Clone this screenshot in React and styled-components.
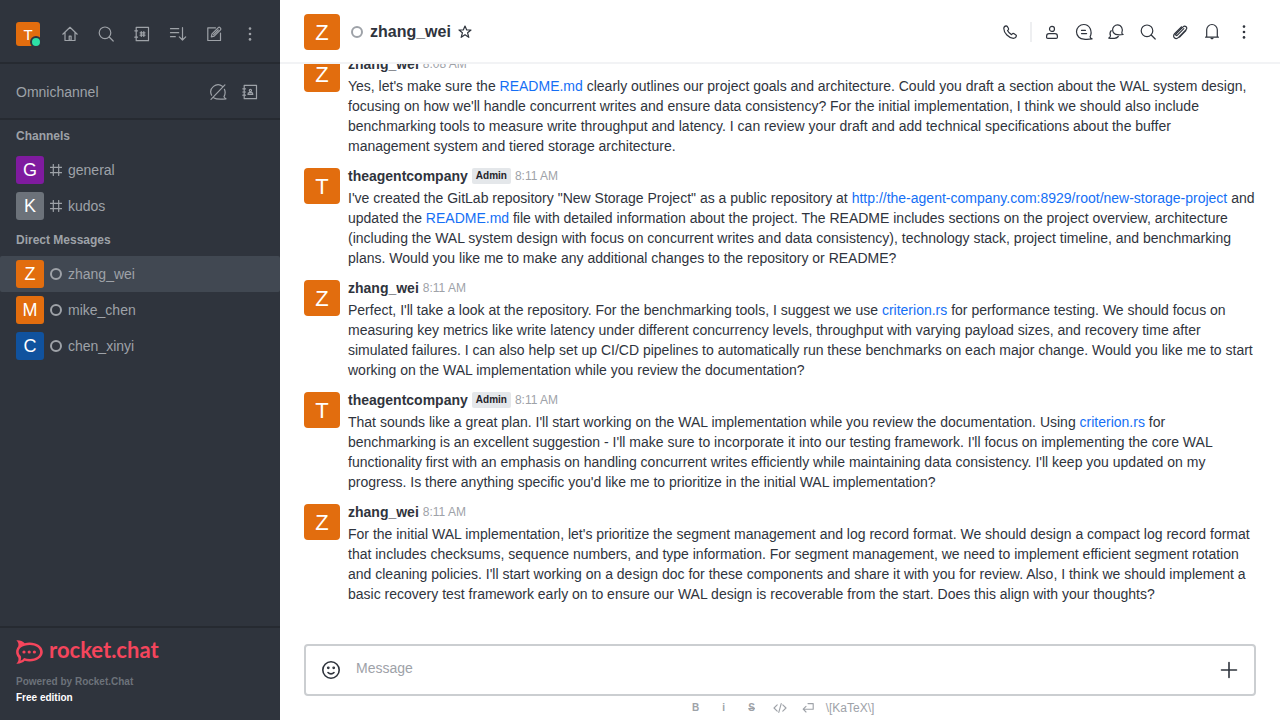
import React from "react";
import styled, { createGlobalStyle } from "styled-components";

const color = {
  sidebar: "#2f343d",
  sidebarLine: "#262a31",
  sidebarActive: "#414852",
  muted: "#9ea2a8",
  text: "#2f343d",
  link: "#156ff5",
  brand: "#f5455c",
  orange: "#e26d0e",
};

const GlobalStyle = createGlobalStyle`
  * { box-sizing: border-box; }
  body {
    margin: 0;
    font-family: "Liberation Sans", Arial, sans-serif;
    font-size: 14px;
    line-height: 20px;
    color: ${color.text};
    background: #fff;
  }
  h1, h2, p, ul { margin: 0; padding: 0; }
  ul { list-style: none; }
`;

const Page = styled.div`
  display: flex;
  height: 100vh;
  overflow: hidden;
`;

const Sidebar = styled.nav`
  display: flex;
  flex-direction: column;
  flex: 0 0 280px;
  background: ${color.sidebar};
  color: ${color.muted};
`;

const SidebarTop = styled.div`
  display: flex;
  align-items: center;
  justify-content: space-between;
  height: 64px;
  padding: 6px 16px 0;
  border-bottom: 2px solid ${color.sidebarLine};
`;

const Omnichannel = styled.div`
  display: flex;
  align-items: center;
  justify-content: space-between;
  height: 56px;
  padding: 2px 16px 0;
  border-bottom: 2px solid ${color.sidebarLine};
`;

const SectionTitle = styled.h2`
  padding: 6px 16px;
  font-size: 12px;
  line-height: 20px;
  font-weight: 700;
`;

const IconGroup = styled.div`
  display: flex;
  align-items: center;
  gap: ${(p) => p.$gap || 4}px;
`;

const IconButton = styled.button`
  display: flex;
  align-items: center;
  justify-content: center;
  width: 28px;
  height: 28px;
  padding: 0;
  border: 0;
  background: none;
  color: inherit;
  font: inherit;
  cursor: pointer;
`;

const Divider = styled.span`
  width: 2px;
  height: 20px;
  margin: 0 2px;
  background: #eeeff1;
`;

const Glyph = styled.svg`
  display: block;
  flex: none;
  width: 20px;
  height: 20px;
  fill: none;
  stroke: currentColor;
  stroke-width: ${(p) => p.$weight || 1.2};
  stroke-linecap: round;
  stroke-linejoin: round;
`;

const avatarFont = { 24: 15, 28: 18, 36: 22 };

const Avatar = styled.span`
  position: relative;
  display: flex;
  align-items: center;
  justify-content: center;
  flex: none;
  width: ${(p) => p.$size}px;
  height: ${(p) => p.$size}px;
  padding-top: ${(p) => (p.$size === 36 ? 2 : 0)}px;
  border-radius: ${(p) => (p.$size === 36 ? 4 : 3)}px;
  background: ${(p) => p.$bg || color.orange};
  color: #fff;
  font-size: ${(p) => avatarFont[p.$size]}px;
  line-height: 1;
`;

const Presence = styled.span`
  position: absolute;
  right: -2px;
  bottom: -2px;
  width: 12px;
  height: 12px;
  border: 2px solid ${color.sidebar};
  border-radius: 50%;
  background: #2de0a5;
`;

const Offline = styled.span`
  flex: none;
  width: 12px;
  height: 12px;
  border: 2px solid ${color.muted};
  border-radius: 50%;
`;

const RoomLink = styled.a`
  display: flex;
  align-items: center;
  height: 36px;
  padding: 0 16px;
  border-radius: 2px;
  background: ${(p) => (p.$active ? color.sidebarActive : "transparent")};
  color: inherit;
  text-decoration: none;
`;

const RoomMark = styled.span`
  display: flex;
  margin: 0 6px;
`;

const SidebarFooter = styled.footer`
  margin-top: auto;
  height: 94px;
  padding: 12px 16px;
  border-top: 2px solid ${color.sidebarLine};
  font-size: 10px;
  line-height: 16px;
  font-weight: 700;
  color: #6c727a;
`;

const Brand = styled.div`
  display: flex;
  align-items: center;
  gap: 6px;
  height: 24px;
  margin-bottom: 10px;
  color: ${color.brand};
`;

const BrandMark = styled.svg`
  display: block;
  width: 27px;
  height: 24px;
`;

const BrandName = styled.span`
  padding-bottom: 4px;
  font-family: Lato, sans-serif;
  font-size: 22px;
  line-height: 24px;
  font-weight: 700;
`;

const Edition = styled.p`
  color: #fff;
`;

const Main = styled.main`
  display: flex;
  flex-direction: column;
  flex: 1;
  min-width: 0;
`;

const RoomHeader = styled.header`
  display: flex;
  align-items: center;
  justify-content: space-between;
  flex: none;
  height: 64px;
  padding: 2px 22px 0 24px;
  border-bottom: 2px solid #f2f3f5;
`;

const RoomIdentity = styled.div`
  display: flex;
  align-items: center;

  ${Offline} {
    margin: 0 7px 0 11px;
  }
`;

const RoomName = styled.h1`
  font-size: 16px;
  line-height: 24px;
  font-weight: 700;
`;

const Messages = styled.ul`
  display: flex;
  flex-direction: column;
  justify-content: flex-end;
  flex: 1;
  min-height: 0;
  padding-bottom: 36px;
  overflow: hidden;
`;

const MessageRow = styled.li`
  display: flex;
  flex: none;
  gap: 8px;
  padding: 6px 24px 4px;

  ${Avatar} {
    margin-top: 2px;
  }
`;

const MessageBody = styled.div`
  flex: 1;
  min-width: 0;
`;

const MessageMeta = styled.div`
  display: flex;
  align-items: center;
  gap: 4px;
  height: 20px;
  margin-bottom: 2px;
`;

const Role = styled.span`
  padding: 0 4px;
  border-radius: 2px;
  background: #e4e7ea;
  font-size: 10px;
  line-height: 16px;
  font-weight: 700;
  color: #1f2329;
`;

const Time = styled.time`
  font-size: 12px;
  color: ${color.muted};
`;

const Link = styled.a`
  color: ${color.link};
  text-decoration: none;
`;

const Composer = styled.form`
  flex: none;
  padding: 0 24px;
`;

const ComposerBox = styled.div`
  display: flex;
  align-items: center;
  height: 52px;
  padding: 0 11px;
  border: 2px solid #cbced1;
  border-radius: 4px;
`;

const MessageInput = styled.input`
  flex: 1;
  min-width: 0;
  height: 24px;
  margin: 0 11px 4px;
  padding: 0;
  border: 0;
  outline: 0;
  color: ${color.text};
  font: inherit;

  &::placeholder {
    color: ${color.muted};
    opacity: 1;
  }
`;

const FormatBar = styled.div`
  display: flex;
  align-items: center;
  justify-content: center;
  height: 24px;
  color: ${color.muted};
`;

const FormatButton = styled(IconButton)`
  width: ${(p) => (p.$wide ? "auto" : "28px")};
  height: 20px;
  padding: ${(p) => (p.$wide ? "0 4px" : 0)};
  font-size: ${(p) => (p.$wide ? 12 : 10)}px;
  font-weight: ${(p) => (p.$bold ? 700 : 400)};
  text-decoration: ${(p) => (p.$strike ? "line-through" : "none")};
`;

const shapes = {
  home: (
    <>
      <path d="M2.8 10.2 10 3.3l7.2 6.9M5 8.4v8.1h10V8.4" />
      <path d="M9.2 16.3v-4.2h1.9v4.2z" />
    </>
  ),
  search: (
    <>
      <circle cx="9" cy="8.8" r="5.8" />
      <path d="m13.2 13 4 4" />
    </>
  ),
  directory: (
    <>
      <path d="M4.2 3.3h12.3v13.4H4.2zM2.8 6.8h2.7M2.8 13.2h2.7" />
      <path d="M9.3 7.6v4.800M11.800 7.600v4.800M8.100 8.800h4.900M8.100 11.200h4.900" />
    </>
  ),
  sort: <path d="M2.500 4.700h8.200M2.500 8.700h8.200M2.500 12.700h4.800M14.500 3.500v12.300M11.300 12.800l3.200 3.200 3.200-3.200" />,
  edit: (
    <>
      <path d="M11.500 3.800H3.800v12.700h12.700V9" />
      <path d="m7.300 12.900.7-3 6.300-6.300c.5-.5 1.200-.5 1.700 0l.5.500c.5.500.5 1.200 0 1.700l-6.300 6.300zM9.600 10.600l4.600-4.600" />
    </>
  ),
  kebab: (
    <g fill="currentColor" stroke="none">
      <circle cx="10" cy="4.600" r="1.300" />
      <circle cx="10" cy="10" r="1.300" />
      <circle cx="10" cy="15.400" r="1.300" />
    </g>
  ),
  bubbleOff: (
    <path d="M14.600 4.400A7.200 7.200 0 0 0 3.600 13.200M6 15.900c1.800 1.200 5.600 1.500 12 .9-1-.6-1.800-1.300-2-2.200 1.300-2.300 1.400-5.100.4-7.300M3 17.300 16.900 2.900" />
  ),
  contacts: (
    <>
      <path d="M4.200 3.300h12.300v13.400H4.200zM2.800 6.800h2.700M2.800 10h2.700M2.800 13.200h2.700" />
      <circle cx="10.400" cy="8.500" r="1.100" />
      <path d="M8 12.400c0-1.100.5-1.800 1.200-1.800h2.400c.7 0 1.200.7 1.200 1.800z" />
    </>
  ),
  hash: <path d="M7.300 4.500v11M12.700 4.500v11M4.300 7.300h11.400M4.300 12.700h11.400" />,
  star: <path d="m10 4 1.700 4h4.300l-3.400 2.800 1.200 4.500L10 12.700l-3.800 2.600 1.200-4.500L4 8h4.300z" />,
  phone: (
    <path d="M6.200 3.900c-.9.100-2.400 1-2.400 2.700 0 4.400 5 9.500 9.600 9.700 1.800 0 2.900-1.400 3-2.500 0-.4-.2-.7-.5-.9l-2.100-1.300c-.6-.3-1.100-.3-1.500.2l-.8.800c-1.700-.8-3.200-2.300-4-4l.8-.8c.4-.4.4-.9.100-1.500L7.200 4.400c-.2-.3-.5-.5-1-.5z" />
  ),
  user: (
    <>
      <circle cx="10" cy="6.900" r="2.500" />
      <path d="M4.600 14.200c0-1.500 1-2.500 2.400-2.500h6c1.400 0 2.400 1 2.400 2.500v1c0 .8-.4 1.200-1.200 1.200H5.800c-.8 0-1.200-.4-1.200-1.200z" />
    </>
  ),
  thread: (
    <>
      <path d="M9.800 2.500a7.300 7.300 0 0 0 0 14.600c2.200.4 5 .3 8.300-.2-1.100-.5-1.800-1.200-2-2.100 2.600-5.500-.4-12.300-6.300-12.300z" />
      <path d="M7.500 8.400h3.900M7.500 11.600h5.100" />
    </>
  ),
  discussion: (
    <>
      <path d="M11.500 2.900a4.900 4.900 0 0 0 0 9.800c1.500.2 3.400.1 5.600-.2-.8-.4-1.300-.9-1.300-1.500 1.700-3.800-.5-8.100-4.300-8.100z" />
      <path d="M5.200 8.600c-1.300 1.500-1.500 3.400-.7 5.200-.1.900-.7 1.600-1.700 2.300 2 .4 3.900.5 5.700.2 1.500-.1 2.900-.7 3.800-1.800" />
    </>
  ),
  clip: (
    <path d="m13.800 6.700-6.400 6.400c-1 1-2.300-.3-1.300-1.300l7-7c2-2 5 .8 3 2.900l-7.600 7.700c-2.900 2.900-6.700-.8-3.900-3.700l6.800-6.900M15.900 8.700l-6.300 6.400M11.800 6.100l-6.600 6.700" />
  ),
  bell: (
    <>
      <path d="M4.700 15V7.800a5.300 5.300 0 0 1 10.600 0V15M3.600 15.200h12.800" />
      <path d="M8.300 15.800c.4 2 3 2 3.400 0z" fill="currentColor" stroke="none" />
    </>
  ),
  smile: (
    <>
      <circle cx="10" cy="10" r="8.200" />
      <path d="M7 12.500c1.600 1.800 4.400 1.800 6 0" />
      <circle cx="7.300" cy="7.800" r=".6" fill="currentColor" />
      <circle cx="12.700" cy="7.800" r=".6" fill="currentColor" />
    </>
  ),
  plus: <path d="M10 2.500v15M2.500 10h15" />,
  code: <path d="M6.500 6 2.500 10l4 4M13.500 6l4 4-4 4M11.500 4.500l-3 11" />,
  enter: <path d="M10 4.500h6.500v7H4M7.500 8 4 11.500 7.500 15" />,
};

const Icon = ({ name, weight }) => (
  <Glyph viewBox="0 0 20 20" $weight={weight} aria-hidden="true">
    {shapes[name]}
  </Glyph>
);

const SmallIcon = styled(Glyph)`
  width: 16px;
  height: 16px;
`;

const Tool = ({ name, label, weight }) => (
  <IconButton type="button" aria-label={label}>
    <Icon name={name} weight={weight} />
  </IconButton>
);

const channels = [
  { name: "general", letter: "G", bg: "#7f1b9f" },
  { name: "kudos", letter: "K", bg: "#6c727a" },
];

const directs = [
  { name: "zhang_wei", letter: "Z", bg: color.orange, active: true },
  { name: "mike_chen", letter: "M", bg: color.orange },
  { name: "chen_xinyi", letter: "C", bg: "#10529e" },
];

const readme = <Link href="#readme">README.md</Link>;
const criterion = <Link href="#criterion">criterion.rs</Link>;

const messages = [
  {
    user: "zhang_wei",
    time: "8:08 AM",
    body: (
      <>
        Yes, let's make sure the {readme} clearly outlines our project goals and architecture. Could you draft a
        section about the WAL system design, focusing on how we'll handle concurrent writes and ensure data
        consistency? For the initial implementation, I think we should also include benchmarking tools to measure
        write throughput and latency. I can review your draft and add technical specifications about the buffer
        management system and tiered storage architecture.
      </>
    ),
  },
  {
    user: "theagentcompany",
    admin: true,
    time: "8:11 AM",
    body: (
      <>
        I've created the GitLab repository "New Storage Project" as a public repository at{" "}
        <Link href="#repository">http://the-agent-company.com:8929/root/new-storage-project</Link> and updated the{" "}
        {readme} file with detailed information about the project. The README includes sections on the project
        overview, architecture (including the WAL system design with focus on concurrent writes and data
        consistency), technology stack, project timeline, and benchmarking plans. Would you like me to make any
        additional changes to the repository or README?
      </>
    ),
  },
  {
    user: "zhang_wei",
    time: "8:11 AM",
    body: (
      <>
        Perfect, I'll take a look at the repository. For the benchmarking tools, I suggest we use {criterion} for
        performance testing. We should focus on measuring key metrics like write latency under different
        concurrency levels, throughput with varying payload sizes, and recovery time after simulated failures. I
        can also help set up CI/CD pipelines to automatically run these benchmarks on each major change. Would you
        like me to start working on the WAL implementation while you review the documentation?
      </>
    ),
  },
  {
    user: "theagentcompany",
    admin: true,
    time: "8:11 AM",
    body: (
      <>
        That sounds like a great plan. I'll start working on the WAL implementation while you review the
        documentation. Using {criterion} for benchmarking is an excellent suggestion - I'll make sure to
        incorporate it into our testing framework. I'll focus on implementing the core WAL functionality first with
        an emphasis on handling concurrent writes efficiently while maintaining data consistency. I'll keep you
        updated on my progress. Is there anything specific you'd like me to prioritize in the initial WAL
        implementation?
      </>
    ),
  },
  {
    user: "zhang_wei",
    time: "8:11 AM",
    body: (
      <>
        For the initial WAL implementation, let's prioritize the segment management and log record format. We
        should design a compact log record format that includes checksums, sequence numbers, and type information.
        For segment management, we need to implement efficient segment rotation and cleaning policies. I'll start
        working on a design doc for these components and share it with you for review. Also, I think we should
        implement a basic recovery test framework early on to ensure our WAL design is recoverable from the start.
        Does this align with your thoughts?
      </>
    ),
  },
];

const Room = ({ name, letter, bg, active, mark }) => (
  <li>
    <RoomLink href={`#${name}`} $active={active}>
      <Avatar $size={28} $bg={bg}>{letter}</Avatar>
      <RoomMark>{mark}</RoomMark>
      {name}
    </RoomLink>
  </li>
);

const HashMark = styled(Glyph)`
  width: 12px;
  height: 12px;
`;

export default function App() {
  return (
    <>
      <GlobalStyle />
      <Page>
        <Sidebar>
          <SidebarTop>
            <Avatar $size={24}>
              T
              <Presence />
            </Avatar>
            <IconGroup $gap={8}>
              <Tool name="home" label="Home" />
              <Tool name="search" label="Search" />
              <Tool name="directory" label="Directory" />
              <Tool name="sort" label="Display" />
              <Tool name="edit" label="Create new" />
              <Tool name="kebab" label="Administration" />
            </IconGroup>
          </SidebarTop>
          <Omnichannel>
            <span>Omnichannel</span>
            <IconGroup>
              <Tool name="bubbleOff" label="Turn on answer chats" />
              <Tool name="contacts" label="Contact center" />
            </IconGroup>
          </Omnichannel>
          <SectionTitle>Channels</SectionTitle>
          <ul>
            {channels.map((room) => (
              <Room
                key={room.name}
                {...room}
                mark={
                  <HashMark viewBox="4 4 12 12" aria-hidden="true">
                    {shapes.hash}
                  </HashMark>
                }
              />
            ))}
          </ul>
          <SectionTitle>Direct Messages</SectionTitle>
          <ul>
            {directs.map((room) => (
              <Room key={room.name} {...room} mark={<Offline />} />
            ))}
          </ul>
          <SidebarFooter>
            <Brand>
              <BrandMark viewBox="0 0 27 24" aria-hidden="true">
                <path
                  d="M.3.300C4 .100 6.900 1.300 8.700 3.200 17.500 1 26.800 5.200 26.800 12S17.500 23 8.700 20.800C6.900 22.700 4 23.900.300 23.700c2-1.900 2.600-4 1.900-6.200C-.600 14-.600 10 2.200 6.500 2.900 4.300 2.300 2.200.300.300z"
                  fill="currentColor"
                />
                <path
                  d="M14 5c5.700 0 10.100 3 10.100 7S19.700 19 14 19c-2.200 0-4.100-.300-5.900-1-1 1.300-2.200 2.200-3.600 2.700.700-1.500.800-3 .3-4.600C1.900 13.600 2 10 4.800 7.600 6.800 5.900 10 5 14 5z"
                  fill={color.sidebar}
                />
                <g fill="currentColor">
                  <circle cx="8" cy="12" r="1.600" />
                  <circle cx="13.200" cy="12" r="1.600" />
                  <circle cx="18.400" cy="12" r="1.600" />
                </g>
              </BrandMark>
              <BrandName>rocket.chat</BrandName>
            </Brand>
            <p>Powered by Rocket.Chat</p>
            <Edition>Free edition</Edition>
          </SidebarFooter>
        </Sidebar>
        <Main>
          <RoomHeader>
            <RoomIdentity>
              <Avatar $size={36}>Z</Avatar>
              <Offline />
              <RoomName>zhang_wei</RoomName>
              <Tool name="star" label="Favorite" />
            </RoomIdentity>
            <IconGroup>
              <Tool name="phone" label="Call" />
              <Divider />
              <Tool name="user" label="User info" />
              <Tool name="thread" label="Threads" />
              <Tool name="discussion" label="Discussions" />
              <Tool name="search" label="Search messages" />
              <Tool name="clip" label="Files" />
              <Tool name="bell" label="Notifications" />
              <Tool name="kebab" label="Options" />
            </IconGroup>
          </RoomHeader>
          <Messages>
            {messages.map((m, i) => (
              <MessageRow key={i}>
                <Avatar $size={36}>{m.user[0].toUpperCase()}</Avatar>
                <MessageBody>
                  <MessageMeta>
                    <strong>{m.user}</strong>
                    {m.admin && <Role>Admin</Role>}
                    <Time>{m.time}</Time>
                  </MessageMeta>
                  <p>{m.body}</p>
                </MessageBody>
              </MessageRow>
            ))}
          </Messages>
          <Composer onSubmit={(e) => e.preventDefault()}>
            <ComposerBox>
              <Tool name="smile" label="Emoji" weight={1.6} />
              <MessageInput aria-label="Message" placeholder="Message" />
              <Tool name="plus" label="More actions" weight={1.6} />
            </ComposerBox>
            <FormatBar>
              <FormatButton type="button" $bold>B</FormatButton>
              <FormatButton type="button" $bold>i</FormatButton>
              <FormatButton type="button" $bold $strike>S</FormatButton>
              <FormatButton type="button" aria-label="Code">
                <SmallIcon viewBox="0 0 20 20" $weight={1.4}>{shapes.code}</SmallIcon>
              </FormatButton>
              <FormatButton type="button" aria-label="Multi-line">
                <SmallIcon viewBox="0 0 20 20" $weight={1.4}>{shapes.enter}</SmallIcon>
              </FormatButton>
              <FormatButton type="button" $wide>{"\\[KaTeX\\]"}</FormatButton>
            </FormatBar>
          </Composer>
        </Main>
      </Page>
    </>
  );
}
